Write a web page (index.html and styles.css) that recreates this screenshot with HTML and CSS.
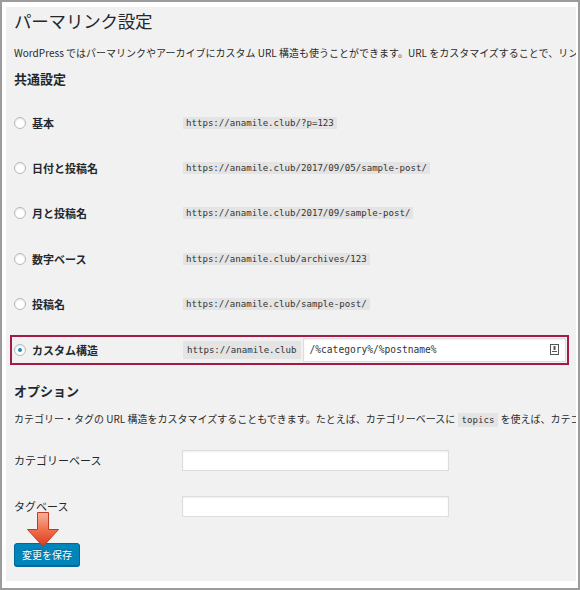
FILE: index.html
```html
<!DOCTYPE html>
<html lang="ja">
<head>
<meta charset="utf-8">
<title>パーマリンク設定</title>
<link rel="stylesheet" href="styles.css">
</head>
<body>
<div class="frame">
  <div class="wrap">
    <h1 class="title">パーマリンク設定</h1>
    <p class="desc">WordPress ではパーマリンクやアーカイブにカスタム URL 構造も使うことができます。URL をカスタマイズすることで、リンクの美しさや使いやすさ、前方互換性を高めることができます。</p>
    <h2 class="section">共通設定</h2>
    <div class="rows">
      <div class="row">
        <label class="opt"><span class="radio"></span>基本</label>
        <code class="code">https://anamile.club/?p=123</code>
      </div>
      <div class="row">
        <label class="opt"><span class="radio"></span>日付と投稿名</label>
        <code class="code">https://anamile.club/2017/09/05/sample-post/</code>
      </div>
      <div class="row">
        <label class="opt"><span class="radio"></span>月と投稿名</label>
        <code class="code">https://anamile.club/2017/09/sample-post/</code>
      </div>
      <div class="row">
        <label class="opt"><span class="radio"></span>数字ベース</label>
        <code class="code">https://anamile.club/archives/123</code>
      </div>
      <div class="row">
        <label class="opt"><span class="radio"></span>投稿名</label>
        <code class="code">https://anamile.club/sample-post/</code>
      </div>
      <div class="row">
        <div class="custom">
          <label class="opt"><span class="radio checked"></span>カスタム構造</label>
          <code class="code prefix">https://anamile.club</code>
          <div class="custom-input">
            <span class="val">/%category%/%postname%</span>
            <svg class="pm" width="9" height="11" viewBox="0 0 9 11"><rect x="0.5" y="0.5" width="8" height="10" fill="#fff" stroke="#555"/><rect x="3.5" y="2" width="2" height="4" fill="#555"/><rect x="2" y="7" width="5" height="1" fill="#555"/></svg>
          </div>
        </div>
      </div>
    </div>
    <h2 class="section opt-head">オプション</h2>
    <p class="desc desc2">カテゴリー・タグの URL 構造をカスタマイズすることもできます。たとえば、カテゴリーベースに <code class="code inline">topics</code> を使えば、カテゴリーのリンクが「https://anamile.club/topics/uncategorized/」のようになります。</p>
    <div class="frow first">
      <span class="flabel">カテゴリーベース</span>
      <span class="finput"></span>
    </div>
    <div class="frow">
      <span class="flabel">タグベース</span>
      <span class="finput"></span>
    </div>
    <div class="submit">
      <svg class="arrow" width="36" height="36" viewBox="0 0 36 36">
        <defs>
          <linearGradient id="ag" x1="0" y1="0" x2="0" y2="1">
            <stop offset="0" stop-color="#f7b49c"/>
            <stop offset="0.55" stop-color="#ee6a47"/>
            <stop offset="1" stop-color="#d93b1f"/>
          </linearGradient>
        </defs>
        <path d="M12.5 0.5 H23.5 V17.5 H33.5 L18 34.5 L2.5 17.5 H12.5 Z" fill="url(#ag)" stroke="#c23a22" stroke-width="1"/>
      </svg>
      <span class="button">変更を保存</span>
    </div>
  </div>
</div>
</body>
</html>
```

FILE: styles.css
```css
html, body {
  margin: 0;
  padding: 0;
  background: #fff;
}
.frame {
  width: 580px;
  height: 590px;
  box-sizing: border-box;
  border: 2px solid #9c9c9c;
  padding: 5px 2px 7px 4px;
  background: #fff;
}
.wrap {
  position: relative;
  height: 100%;
  background: #f1f1f1;
  overflow: hidden;
  padding-left: 8px;
  color: #23282d;
  font-family: "Noto Sans CJK JP", "Noto Sans", sans-serif;
}
.title {
  margin: 0;
  font-size: 17.5px;
  font-weight: 400;
  line-height: 28px;
  letter-spacing: -0.2px;
}
.desc {
  margin: 8px 0 0;
  font-size: 10px;
  line-height: 20px;
  white-space: nowrap;
  color: #2a2a2a;
}
.section {
  margin: 6px 0 0;
  font-size: 13px;
  font-weight: 700;
  line-height: 20px;
}
.rows {
  margin-top: 11px;
}
.row {
  height: 45.4px;
  display: flex;
  align-items: center;
}
.opt {
  display: flex;
  align-items: center;
  width: 169px;
  flex: none;
  font-size: 11px;
  font-weight: 700;
  line-height: 14px;
}
.radio {
  width: 10px;
  height: 10px;
  border: 1px solid #b4b9be;
  border-radius: 50%;
  background: #fff;
  box-shadow: inset 0 1px 2px rgba(0,0,0,0.1);
  margin-right: 6px;
  flex: none;
  display: flex;
  align-items: center;
  justify-content: center;
}
.radio.checked::after {
  content: "";
  width: 4px;
  height: 4px;
  border-radius: 50%;
  background: #1e8cbe;
}
.code {
  font-family: "DejaVu Sans Mono", "Liberation Mono", monospace;
  font-size: 9.1px;
  line-height: 12px;
  padding: 0 3px;
  background: #e4e4e4;
  color: #333;
  white-space: nowrap;
}
.custom {
  margin-left: -4px;
  width: 559px;
  height: 30px;
  box-sizing: border-box;
  border: 2px solid #a31a47;
  display: flex;
  align-items: center;
  padding-left: 2px;
}
.custom .opt {
  width: 169px;
}
.code.prefix {
  line-height: 18px;
  padding: 0 4px 0 4px;
}
.custom-input {
  flex: 1;
  height: 22px;
  margin-left: 2px;
  margin-right: 1px;
  background: #fff;
  border: 1px solid #ddd;
  box-shadow: inset 0 1px 2px rgba(0,0,0,0.07);
  display: flex;
  align-items: center;
  justify-content: space-between;
  padding: 0 6px 0 6px;
}
.val {
  font-family: "DejaVu Sans Mono", "Liberation Mono", monospace;
  font-size: 9.6px;
  color: #333;
}
.pm {
  display: block;
}
.opt-head {
  margin-top: 9px;
}
.desc2 {
  margin-top: 8px;
}
.code.inline {
  padding: 2px 4px;
  line-height: 14px;
}
.frow {
  display: flex;
  align-items: center;
  height: 46px;
}
.frow.first {
  margin-top: 8px;
}
.flabel {
  width: 168px;
  flex: none;
  font-size: 11px;
  line-height: 14px;
}
.finput {
  width: 265px;
  height: 19px;
  background: #fff;
  border: 1px solid #ddd;
  box-shadow: inset 0 1px 2px rgba(0,0,0,0.07);
}
.submit {
  position: relative;
  margin-top: 14px;
}
.arrow {
  position: absolute;
  left: 11px;
  top: -31px;
}
.button {
  display: inline-block;
  vertical-align: top;
  box-sizing: border-box;
  width: 66px;
  height: 23px;
  line-height: 21px;
  text-align: center;
  font-size: 10px;
  color: #fff;
  background: #0085ba;
  border: 1px solid #006799;
  border-radius: 3px;
  box-shadow: 0 1px 0 #006799;
  text-shadow: 0 -1px 1px #006799;
}
```
